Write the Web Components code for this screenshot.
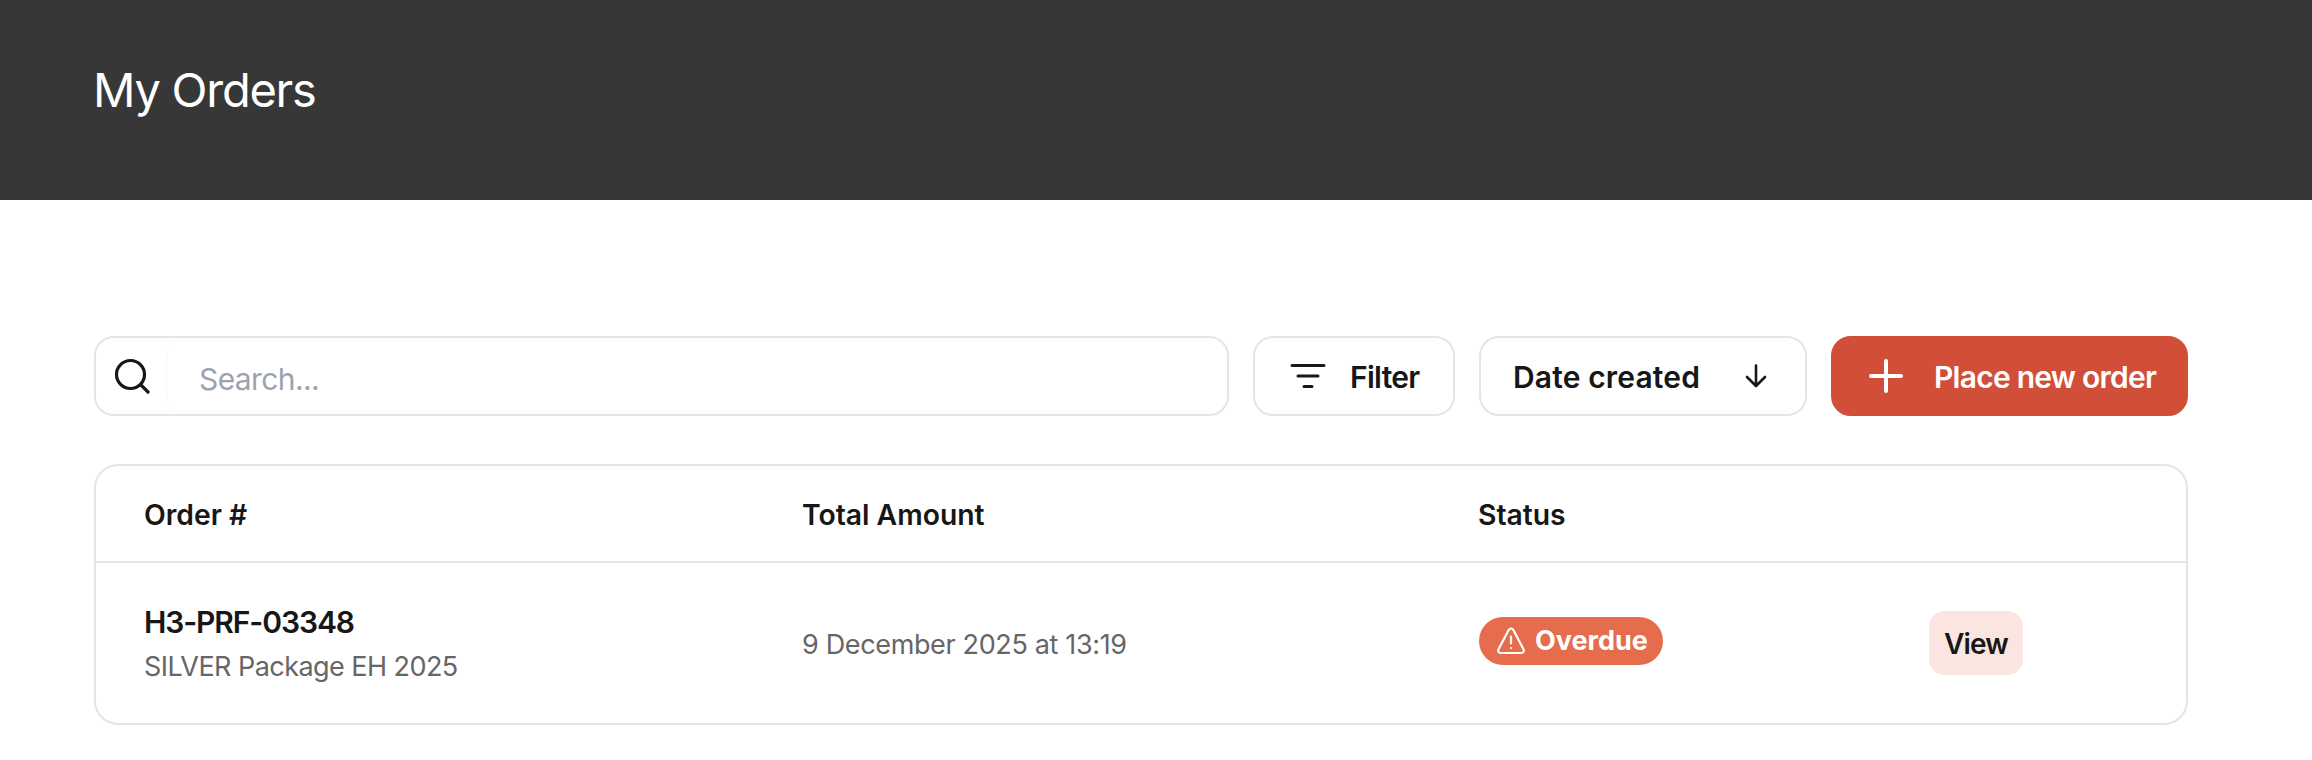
<!doctype html>
<html lang="en"><head><meta charset="utf-8"><title>My Orders</title>
<style>
html,body{margin:0;background:#fff;font-family:Inter,"Liberation Sans",sans-serif;color:#171717}
orders-main{display:block}
</style></head>
<body>
<page-header>My Orders</page-header>
<orders-main>
  <order-toolbar>
    <search-box placeholder="Search..."></search-box>
    <tool-button icon="filter" w="202" gap="18" ls="-.7">Filter</tool-button>
    <tool-button icon="sort" w="328" gap="36" ls=".15" trailing>Date created</tool-button>
    <tool-button icon="plus" w="357" gap="24" ls="-.75" primary>Place new order</tool-button>
  </order-toolbar>
  <orders-table>
    <order-row order="H3-PRF-03348" pack="SILVER Package EH 2025" date="9 December 2025 at 13:19" status="Overdue"></order-row>
  </orders-table>
</orders-main>
<script>
const ICONS={
 search:'<svg width="36" height="36" viewBox="0 0 36 36" fill="none" stroke="#171717" stroke-width="3.200" stroke-linecap="round"><circle cx="16.5" cy="16.5" r="14"/><path d="M27 27l7 7"/></svg>',
 filter:'<svg width="48" height="48" viewBox="0 0 48 48" fill="none" stroke="#171717" stroke-width="3" stroke-linecap="round"><path d="M8 13.5h32M14 24h20M20 34.500h8"/></svg>',
 sort:'<svg width="40" height="40" viewBox="0 0 40 40" fill="none" stroke="#171717" stroke-width="2.600" stroke-linecap="round" stroke-linejoin="round"><path d="M20 9.500v20M11 21l9 9 9-9"/></svg>',
 plus:'<svg width="48" height="48" viewBox="0 0 48 48" fill="none" stroke="#fff" stroke-width="4" stroke-linecap="round"><path d="M24 9v30M9 24h30"/></svg>',
 warn:'<svg width="30" height="30" viewBox="0 0 30 30" fill="none" stroke="#fff" stroke-width="2.200" stroke-linecap="round" stroke-linejoin="round"><path d="M12.800 3.800a2.500 2.500 0 0 1 4.400 0l10.300 19.400a2.500 2.500 0 0 1-2.200 3.800H4.700a2.500 2.500 0 0 1-2.200-3.800z"/><path d="M15 10.500v7M15 22v.1"/></svg>'
};
function def(name,css,html,init){
 customElements.define(name,class extends HTMLElement{
  connectedCallback(){ if(this.shadowRoot) return;
   const r=this.attachShadow({mode:'open'});
   r.innerHTML='<style>'+css+'</style>'+(typeof html==='function'?html(this):html);
   if(init) init(this,r);
  }
 });
}
def('page-header',`:host{display:flex;align-items:center;box-sizing:border-box;height:200px;padding:0 92px 22px 93px;background:#373737;color:#fff;font-size:47px;font-weight:400;letter-spacing:-1.25px}`,'<slot></slot>');
def('orders-main',`:host{display:block;padding:136px 124px 0 94px}`,'<slot></slot>');
def('order-toolbar',`:host{display:flex;gap:24px;height:80px;margin-bottom:48px}`,'<slot></slot>');
def('search-box',`:host{flex:1;display:flex;box-sizing:border-box;border:2px solid #e5e5e5;border-radius:20px;background:#fff;overflow:hidden}
.i{width:70px;flex:none;display:flex;align-items:center;padding-left:18px;box-sizing:border-box}
.f{flex:1;display:flex;align-items:center;padding:5px 0 0 32px;border-left:1px solid #f7f7f7;border-radius:20px;font-size:30px;letter-spacing:-.6px;color:#9ca3af}`,
 h=>`<div class="i">${ICONS.search}</div><div class="f">${h.getAttribute('placeholder')}</div>`);
def('tool-button',`:host{flex:none;display:flex;align-items:center;box-sizing:border-box;border:2px solid #e5e5e5;border-radius:20px;background:#fff;font-size:30px;font-weight:600;color:#171717;white-space:nowrap}
:host([primary]){background:#d14f38;border-color:#d14f38;color:#fff;font-weight:600}
svg{display:block;flex:none}
span{padding-top:2px}`,
 h=>{const ic=ICONS[h.getAttribute('icon')];const t=`<span style="letter-spacing:${h.getAttribute('ls')}px"><slot></slot></span>`;return h.hasAttribute('trailing')?t+ic:ic+t;},
 h=>{h.style.width=h.getAttribute('w')+'px';h.style.gap=h.getAttribute('gap')+'px';h.style.paddingLeft=h.hasAttribute('trailing')?'32px':'29px';});
def('orders-table',`:host{display:block;border:2px solid #e5e5e5;border-radius:24px;overflow:hidden;background:#fff}
.h{display:grid;grid-template-columns:658px 676px 1fr;align-items:center;padding:2px 0 0 48px;height:93px;border-bottom:2px solid #e5e5e5;font-size:28.300px;font-weight:600;color:#171717}`,
 `<div class="h"><div>Order #</div><div>Total Amount</div><div>Status</div></div><slot></slot>`);
def('status-badge',`:host{display:inline-flex;align-items:center;gap:9px;height:48px;padding:0 15px 0 17px;border-radius:24px;background:#e56d4d;color:#fff;font-size:27px;font-weight:700}`,h=>`${ICONS.warn}<slot></slot>`);
def('order-row',`:host{display:grid;grid-template-columns:658px 677px 450px 1fr;align-items:center;height:160px;padding-left:48px;font-size:27px;color:#666}
.n{font-size:30px;font-weight:600;letter-spacing:-1.1px;color:#171717;line-height:40px;margin-top:2px}
.p{line-height:40px;margin-top:5px;letter-spacing:-.55px}
.d{letter-spacing:-.35px;padding-top:2px}
.s{display:flex;padding-bottom:5px}
.v{display:flex;align-items:center;justify-content:center;width:94px;height:64px;padding-top:1px;box-sizing:border-box;border-radius:16px;background:#fbe5e0;color:#171717;font-size:28px;font-weight:600;letter-spacing:-.8px}`,
 h=>`<div><div class="n">${h.getAttribute('order')}</div><div class="p">${h.getAttribute('pack')}</div></div><div class="d">${h.getAttribute('date')}</div><div class="s"><status-badge>${h.getAttribute('status')}</status-badge></div><div class="v">View</div>`);
</script>
</body></html>
